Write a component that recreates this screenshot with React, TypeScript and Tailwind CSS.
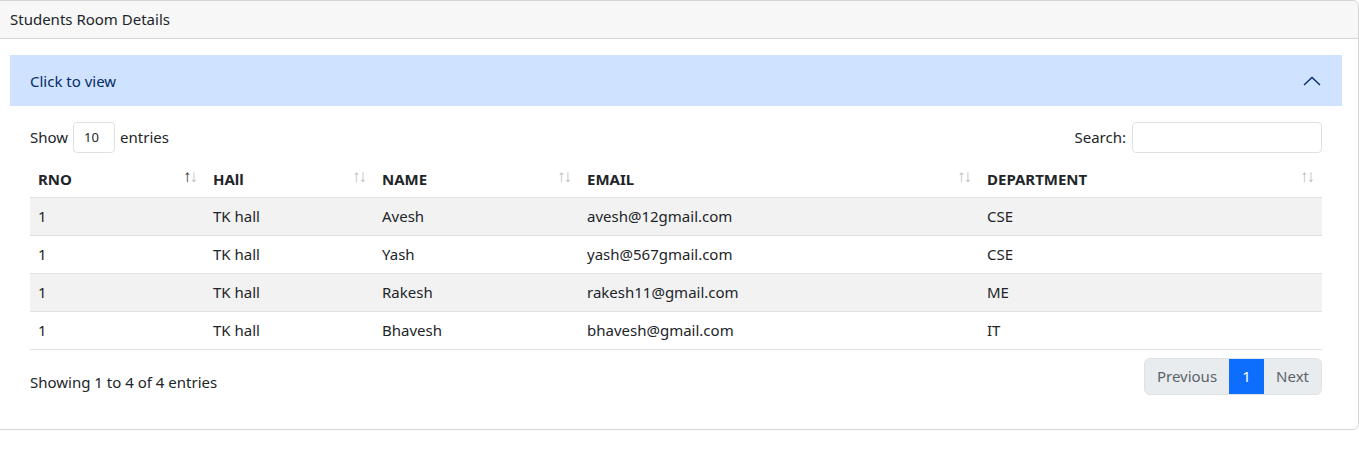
type Student = {
  rno: string;
  hall: string;
  name: string;
  email: string;
  dept: string;
};

const STUDENTS: Student[] = [
  { rno: "1", hall: "TK hall", name: "Avesh", email: "avesh@12gmail.com", dept: "CSE" },
  { rno: "1", hall: "TK hall", name: "Yash", email: "yash@567gmail.com", dept: "CSE" },
  { rno: "1", hall: "TK hall", name: "Rakesh", email: "rakesh11@gmail.com", dept: "ME" },
  { rno: "1", hall: "TK hall", name: "Bhavesh", email: "bhavesh@gmail.com", dept: "IT" },
];

const COLUMNS = [
  { label: "RNO", width: "w-[175px]", active: true },
  { label: "HAll", width: "w-[169px]", active: false },
  { label: "NAME", width: "w-[205px]", active: false },
  { label: "EMAIL", width: "w-[400px]", active: false },
  { label: "DEPARTMENT", width: "w-[343px]", active: false },
];

function SortIcon({ active }: { active: boolean }) {
  return (
    <span className="absolute right-[9px] top-[3px] flex text-[17px] leading-none font-normal tracking-[-2px]">
      <span className={active ? "text-[#3a2a1a]" : "text-[#b8bcc2]"}>↑</span>
      <span className="text-[#b8bcc2]">↓</span>
    </span>
  );
}

export default function App() {
  return (
    <div
      className="min-h-[465px] bg-white text-[#212529] text-[15px]"
      style={{ fontFamily: '"Noto Sans", "Open Sans", sans-serif' }}
    >
      <div className="-ml-[7px] w-[1366px] rounded-[6px] border border-[#d5d5d5] bg-white">
        {/* card header */}
        <div className="h-[38px] flex items-center px-4 bg-[#f7f7f7] border-b border-[#d5d5d5] rounded-t-[6px] text-[15px]">
          Students Room Details
        </div>

        <div className="px-4 pt-4 pb-[34px]">
          {/* accordion */}
          <div className="h-[51px] flex items-center justify-between px-5 bg-[#cfe2ff] text-[#052c65]">
            <span className="pt-[2px]">Click to view</span>
            <svg width="18" height="10" viewBox="0 0 18 10" fill="none" className="mr-[1px] mt-[1px]">
              <polyline points="1,9 9,1.5 17,9" stroke="#052c65" strokeWidth="1.4" />
            </svg>
          </div>

          <div className="px-5 pt-4">
            {/* controls */}
            <div className="flex items-center justify-between h-[31px]">
              <div className="flex items-center gap-[5px]">
                <span>Show</span>
                <div className="w-[42px] h-[31px] border border-[#dee2e6] rounded-[4px] flex items-center pl-[10px] text-[13px]">
                  10
                </div>
                <span>entries</span>
              </div>
              <div className="flex items-center gap-[6px]">
                <span>Search:</span>
                <div className="w-[190px] h-[31px] border border-[#dee2e6] rounded-[4px]" />
              </div>
            </div>

            {/* table */}
            <table className="mt-[11px] w-full border-collapse table-fixed">
              <thead>
                <tr className="h-[33px] border-b border-[#dee2e6]">
                  {COLUMNS.map((c) => (
                    <th
                      key={c.label}
                      className={`${c.width} relative text-left font-bold px-2 pb-[3px] align-middle text-[15px]`}
                    >
                      {c.label}
                      <SortIcon active={c.active} />
                    </th>
                  ))}
                </tr>
              </thead>
              <tbody>
                {STUDENTS.map((s, i) => (
                  <tr
                    key={s.name}
                    className={`h-[38px] border-b border-[#dee2e6] ${i % 2 === 0 ? "bg-[#f2f2f2]" : "bg-white"}`}
                  >
                    <td className="px-2 pt-[1px]">{s.rno}</td>
                    <td className="px-2 pt-[1px]">{s.hall}</td>
                    <td className="px-2 pt-[1px]">{s.name}</td>
                    <td className="px-2 pt-[1px]">{s.email}</td>
                    <td className="px-2 pt-[1px]">{s.dept}</td>
                  </tr>
                ))}
              </tbody>
            </table>

            {/* footer */}
            <div className="flex items-start justify-between mt-[8px]">
              <span className="pt-[13px]">Showing 1 to 4 of 4 entries</span>
              <div className="flex h-[37px] rounded-[6px] overflow-hidden border border-[#dee2e6] bg-[#e9ecef] text-[#5c636a]">
                <span className="px-3 flex items-center">Previous</span>
                <span className="w-[35px] flex items-center justify-center bg-[#0d6efd] text-white">1</span>
                <span className="px-3 flex items-center">Next</span>
              </div>
            </div>
          </div>
        </div>
      </div>
    </div>
  );
}
